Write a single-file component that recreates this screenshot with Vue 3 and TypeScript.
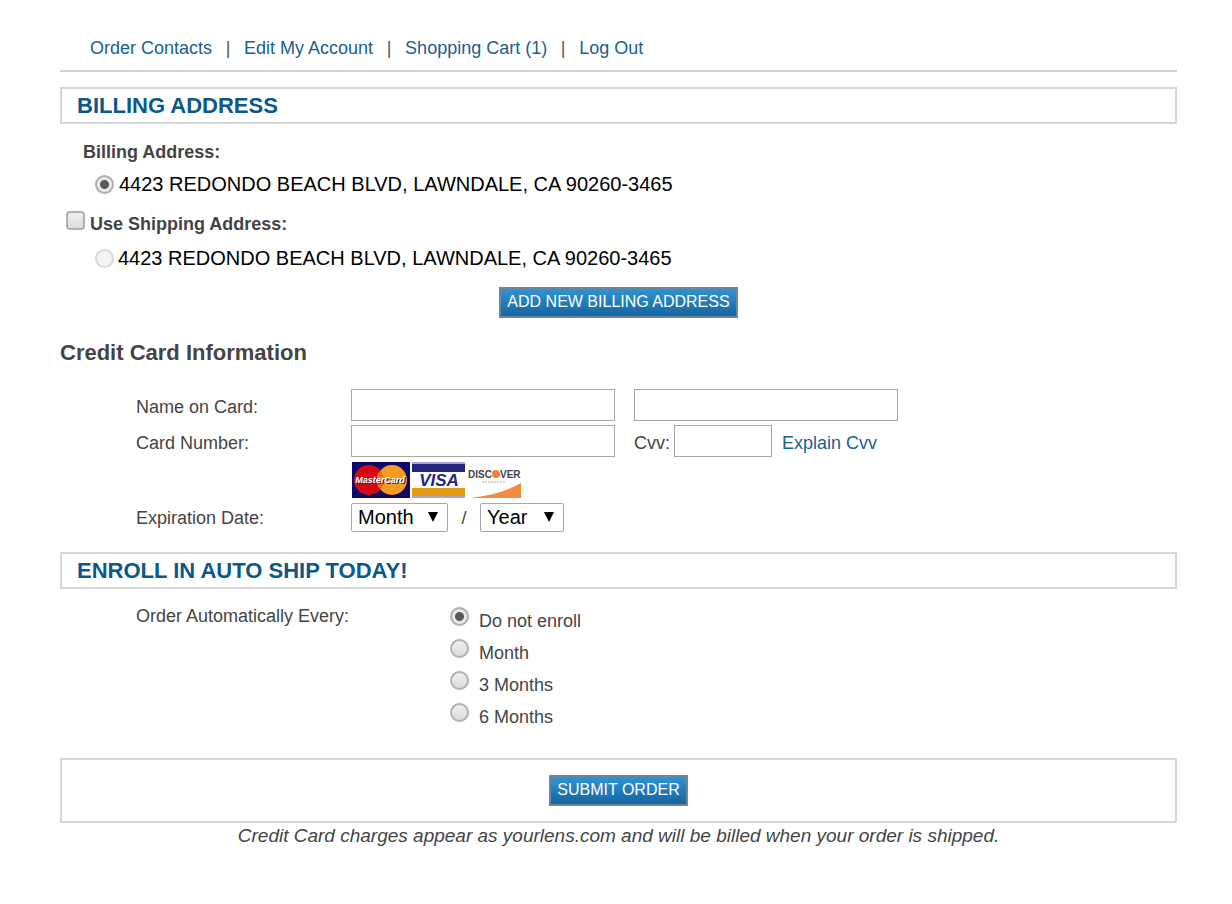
<script setup lang="ts">
import { ref } from 'vue'

interface NavLink {
  label: string
  href: string
}

const links: NavLink[] = [
  { label: 'Order Contacts', href: '#order' },
  { label: 'Edit My Account', href: '#account' },
  { label: 'Shopping Cart (1)', href: '#cart' },
  { label: 'Log Out', href: '#logout' },
]

const address = '4423 REDONDO BEACH BLVD, LAWNDALE, CA 90260-3465'
const intervals: string[] = ['Do not enroll', 'Month', '3 Months', '6 Months']

const billing = ref('billing')
const useShipping = ref(false)
const interval = ref('Do not enroll')
const month = ref('')
const year = ref('')
const years: number[] = [2024, 2025, 2026, 2027, 2028, 2029, 2030]
</script>

<template>
  <main class="page">
    <nav class="nav">
      <template v-for="(link, i) in links" :key="link.href">
        <span v-if="i > 0" class="divider">|</span>
        <a :href="link.href">{{ link.label }}</a>
      </template>
    </nav>

    <form @submit.prevent>
      <h2 class="title">BILLING ADDRESS</h2>
      <section class="addresses">
        <p class="address-heading">Billing Address:</p>
        <label class="address">
          <input v-model="billing" type="radio" name="billing" value="billing" />
          <span>{{ address }}</span>
        </label>
        <label class="use-shipping">
          <input v-model="useShipping" type="checkbox" />
          <span>Use Shipping Address:</span>
        </label>
        <label class="address shipping">
          <input v-model="billing" type="radio" name="billing" value="shipping" :disabled="!useShipping" />
          <span>{{ address }}</span>
        </label>
        <button type="button" class="button add">ADD NEW BILLING ADDRESS</button>
      </section>

      <h3 class="subtitle">Credit Card Information</h3>
      <section class="card">
        <label class="row-label" for="first-name">Name on Card:</label>
        <div class="fields">
          <input id="first-name" class="box" type="text" />
          <input class="box" type="text" aria-label="Last name on card" />
        </div>

        <label class="row-label" for="number">Card Number:</label>
        <div class="fields">
          <input id="number" class="box" type="text" />
          <div class="cvv">
            <label class="row-label" for="cvv">Cvv:</label>
            <input id="cvv" class="box short" type="text" />
            <a class="explain row-label" href="#cvv-help">Explain Cvv</a>
          </div>
        </div>

        <div class="brands">
          <svg width="172" height="38" viewBox="0 0 172 38" role="img" aria-label="MasterCard, Visa, Discover">
            <rect x="1" y="1" width="58" height="36" fill="#0a0a6c" />
            <circle cx="18" cy="19" r="15" fill="#d40a10" />
            <circle cx="41" cy="19" r="15" fill="#f79a22" />
            <path d="M29.5 9.4a15 15 0 0 1 0 19.2a15 15 0 0 1 0-19.2z" fill="#e55d1c" />
            <path d="M27 13h6M26 16h8M26 22h8M27 25h6" stroke="#f79a22" stroke-width="1" />
            <text x="30" y="23" text-anchor="middle" class="mc shade">MasterCard</text>
            <text x="29" y="22" text-anchor="middle" class="mc">MasterCard</text>
            <rect x="61" y="1" width="53" height="2" fill="#a3a4d0" />
            <rect x="61" y="3" width="53" height="8" fill="#25257f" />
            <rect x="61" y="11" width="53" height="16" fill="#fff" />
            <text x="88" y="25" text-anchor="middle" class="visa">VISA</text>
            <rect x="61" y="27" width="53" height="8" fill="#e59b16" />
            <rect x="61" y="35" width="53" height="2" fill="#a9a7bd" />
            <text x="117" y="17" class="disc">DISC</text>
            <circle cx="145" cy="13" r="4" fill="#f4813b" />
            <text x="149" y="17" class="disc">VER</text>
            <path d="M131 21h24" stroke="#aaa" stroke-width="1" stroke-dasharray="2 1" />
            <path d="M122 36.500Q151 33 170 22v15h-48z" fill="#f58a42" />
          </svg>
        </div>

        <label for="month">Expiration Date:</label>
        <div class="expiry">
          <span class="picker">
            <select id="month" v-model="month" class="month">
              <option value="">Month</option>
              <option v-for="m in 12" :key="m" :value="String(m)">{{ m }}</option>
            </select>
            <svg class="arrow" width="10" height="10" viewBox="0 0 10 10" aria-hidden="true"><path d="M0 0h10L5 10z" /></svg>
          </span>
          <span class="slash">/</span>
          <span class="picker">
            <select v-model="year" class="year" aria-label="Expiration year">
              <option value="">Year</option>
              <option v-for="y in years" :key="y" :value="String(y)">{{ y }}</option>
            </select>
            <svg class="arrow" width="10" height="10" viewBox="0 0 10 10" aria-hidden="true"><path d="M0 0h10L5 10z" /></svg>
          </span>
        </div>
      </section>

      <h2 class="title">ENROLL IN AUTO SHIP TODAY!</h2>
      <section class="enroll" role="radiogroup" aria-labelledby="every">
        <span id="every" class="every">Order Automatically Every:</span>
        <div class="choices">
          <label v-for="item in intervals" :key="item" class="choice">
            <input v-model="interval" type="radio" name="interval" :value="item" />
            <span>{{ item }}</span>
          </label>
        </div>
      </section>

      <div class="submit">
        <button type="submit" class="button">SUBMIT ORDER</button>
      </div>
    </form>
    <p class="note">Credit Card charges appear as yourlens.com and will be billed when your order is shipped.</p>
  </main>
</template>

<style>
body {
  margin: 0;
  background: #fff;
}
</style>

<style scoped>
.page {
  padding: 36px 55px 56px 60px;
  font: 18px/24px "Liberation Sans", Arial, sans-serif;
  color: #444;
}

.page * {
  box-sizing: border-box;
}

a {
  color: #1c608f;
  text-decoration: none;
}

p,
h2,
h3 {
  margin: 0;
}

input,
select,
button {
  margin: 0;
  font-family: inherit;
}

.nav {
  display: flex;
  padding: 0 0 10px 30px;
  border-bottom: 2px solid #d3d3d3;
}

.divider {
  width: 32px;
  text-align: center;
  color: #555;
}

.title {
  margin-top: 15px;
  padding: 0 15px;
  border: 2px solid #d6d6d6;
  font-size: 22px;
  line-height: 33px;
  color: #0d5789;
}

input[type="radio"],
input[type="checkbox"] {
  appearance: none;
  flex: none;
  width: 19px;
  height: 19px;
  border: 2px solid #b0b0b0;
  background: linear-gradient(#eee, #dcdcdc);
}

input[type="radio"] {
  border-radius: 50%;
}

input[type="checkbox"] {
  border-radius: 4px;
}

input[type="radio"]:checked {
  background: radial-gradient(circle, #5a5a5a 0 4px, #e8e8e8 5px);
}

input[type="checkbox"]:checked {
  background: #666;
}

input[type="radio"]:disabled {
  border-color: #d8d8d8;
  background: #f3f3f3;
}

.addresses {
  display: flex;
  flex-direction: column;
  align-items: flex-start;
  padding-top: 16px;
}

.address-heading {
  padding-left: 23px;
  font-weight: bold;
}

.address {
  display: flex;
  align-items: center;
  gap: 5px;
  margin-top: 8px;
  padding-left: 35px;
  font-size: 20px;
  color: #000;
}

.use-shipping {
  display: flex;
  gap: 5px;
  margin-top: 15px;
  padding-left: 6px;
  font-weight: bold;
}

.use-shipping span {
  padding-top: 1px;
}

.shipping {
  gap: 4px;
  margin-top: 10px;
}

.button {
  height: 31px;
  padding: 0 6px 2px;
  border: 2px solid #6d8799;
  background: linear-gradient(#3193d2, #1465a0);
  font-size: 16px;
  line-height: 24px;
  color: #fff;
}

.add {
  align-self: center;
  margin-top: 17px;
}

.subtitle {
  margin-top: 23px;
  font-size: 22px;
}

.card {
  display: grid;
  grid-template-columns: 215px 1fr;
  row-gap: 4px;
  align-items: center;
  padding: 24px 0 5px 76px;
}

.row-label {
  padding-top: 3px;
}

.fields {
  display: flex;
  gap: 19px;
}

.box {
  width: 264px;
  height: 32px;
  padding: 0 6px;
  border: 1px solid #a6a6a6;
  background: #fff;
  font-size: 18px;
}

.short {
  width: 98px;
}

.cvv {
  display: flex;
  align-items: center;
  gap: 4px;
}

.explain {
  padding-left: 6px;
}

.brands {
  grid-column: 2;
  height: 38px;
}

.brands svg {
  display: block;
}

.mc {
  font: italic bold 9px "Liberation Sans", Arial, sans-serif;
  fill: #fff;
}

.shade {
  fill: #222255;
}

.visa {
  font: italic bold 17px "Liberation Sans", Arial, sans-serif;
  fill: #25257f;
}

.disc {
  font: bold 10px "Liberation Sans", Arial, sans-serif;
  fill: #444;
}

.expiry {
  display: flex;
  align-items: center;
}

.picker {
  position: relative;
  display: flex;
}

.picker select {
  appearance: none;
  height: 29px;
  padding: 0 6px 2px;
  border: 1px solid #a6a6a6;
  border-radius: 2px;
  background: #fff;
  font-size: 20px;
  color: #000;
}

.month {
  width: 97px;
}

.year {
  width: 84px;
}

.arrow {
  position: absolute;
  top: 9px;
  right: 10px;
  pointer-events: none;
}

.slash {
  width: 32px;
  text-align: center;
}

.enroll {
  display: grid;
  grid-template-columns: 314px 1fr;
  padding: 15px 0 26px 76px;
}

.choice {
  display: flex;
  gap: 10px;
  height: 32px;
}

.choice input {
  margin-top: 3px;
}

.choice span {
  padding-top: 5px;
}

.submit {
  display: flex;
  justify-content: center;
  padding: 15px 0;
  border: 2px solid #d6d6d6;
}

.note {
  padding-top: 1px;
  font-size: 19px;
  font-style: italic;
  text-align: center;
}
</style>
